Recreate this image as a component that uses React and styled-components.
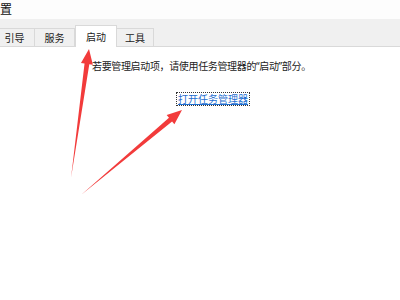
import styled, { createGlobalStyle } from 'styled-components';

const GlobalStyle = createGlobalStyle`
  html, body {
    margin: 0;
    padding: 0;
    background: #ffffff;
  }
  body {
    font-family: "Noto Sans", "Noto Sans CJK SC", sans-serif;
    color: #1a1a1a;
  }
`;

const Window = styled.div`
  position: relative;
  width: 400px;
  height: 300px;
  overflow: hidden;
  background: #ffffff;
`;

const TitleBar = styled.div`
  height: 19px;
  display: flex;
  align-items: center;
  background: #fdfdfd;
`;

const Title = styled.span`
  margin-left: -36px;
  font-size: 12px;
  line-height: 1;
  color: #111;
  white-space: nowrap;
`;

const TabStrip = styled.div`
  height: 28px;
  display: flex;
  align-items: flex-end;
  background: #f0f0f0;
  border-bottom: 1px solid #d9d9d9;
  margin-left: -6px;
  box-sizing: border-box;
`;

const Tab = styled.div`
  width: ${p => p.$w}px;
  height: ${p => (p.$active ? 22 : 19)}px;
  box-sizing: border-box;
  border: 1px solid #d9d9d9;
  border-left: ${p => (p.$active ? '1px solid #d9d9d9' : 'none')};
  border-bottom: ${p => (p.$active ? 'none' : '1px solid #d9d9d9')};
  margin-bottom: -1px;
  background: ${p => (p.$active ? '#ffffff' : '#f0f0f0')};
  display: flex;
  align-items: ${p => (p.$active ? 'flex-start' : 'center')};
  justify-content: center;
  padding-top: ${p => (p.$active ? '3px' : '0')};
  font-size: 10px;
  color: #222;
  &:first-child {
    border-left: 1px solid #d9d9d9;
  }
`;

const Content = styled.div`
  display: flex;
  flex-direction: column;
  align-items: flex-start;
  padding: 12px 0 0 92px;
`;

const Notice = styled.p`
  margin: 0;
  font-size: 10px;
  line-height: 14px;
  letter-spacing: -0.35px;
  color: #222;
  white-space: nowrap;
`;

const TaskLink = styled.a`
  margin: 20px 0 0 85px;
  font-size: 10px;
  line-height: 12px;
  color: #1f6fd1;
  text-decoration: underline;
  outline: 1px dotted #333;
  outline-offset: 0;
  padding: 0 1px;
  white-space: nowrap;
  cursor: pointer;
`;

const Overlay = styled.svg`
  position: absolute;
  left: 0;
  top: 0;
  pointer-events: none;
`;

function Arrow({ x1, y1, x2, y2 }) {
  const dx = x2 - x1;
  const dy = y2 - y1;
  const len = Math.hypot(dx, dy);
  const ux = dx / len;
  const uy = dy / len;
  const nx = -uy;
  const ny = ux;
  const head = 15;
  const hw = 6;
  const sw = 2.4;
  const bx = x2 - ux * head;
  const by = y2 - uy * head;
  const pts = [
    [x1, y1],
    [bx + nx * sw, by + ny * sw],
    [bx + nx * hw, by + ny * hw],
    [x2, y2],
    [bx - nx * hw, by - ny * hw],
    [bx - nx * sw, by - ny * sw],
  ];
  return (
    <polygon
      points={pts.map(p => p.join(',')).join(' ')}
      fill="#f23b3b"
    />
  );
}

export default function App() {
  return (
    <>
      <GlobalStyle />
      <Window>
        <TitleBar>
          <Title>系统配置</Title>
        </TitleBar>
        <TabStrip>
          <Tab $w={41}>引导</Tab>
          <Tab $w={40}>服务</Tab>
          <Tab $w={42} $active>启动</Tab>
          <Tab $w={37}>工具</Tab>
        </TabStrip>
        <Content>
          <Notice>若要管理启动项，请使用任务管理器的“启动”部分。</Notice>
          <TaskLink>打开任务管理器</TaskLink>
        </Content>
        <Overlay width="400" height="300" viewBox="0 0 400 300">
          <Arrow x1={71} y1={178} x2={89} y2={49} />
          <Arrow x1={81} y1={195} x2={182} y2={110} />
        </Overlay>
      </Window>
    </>
  );
}
